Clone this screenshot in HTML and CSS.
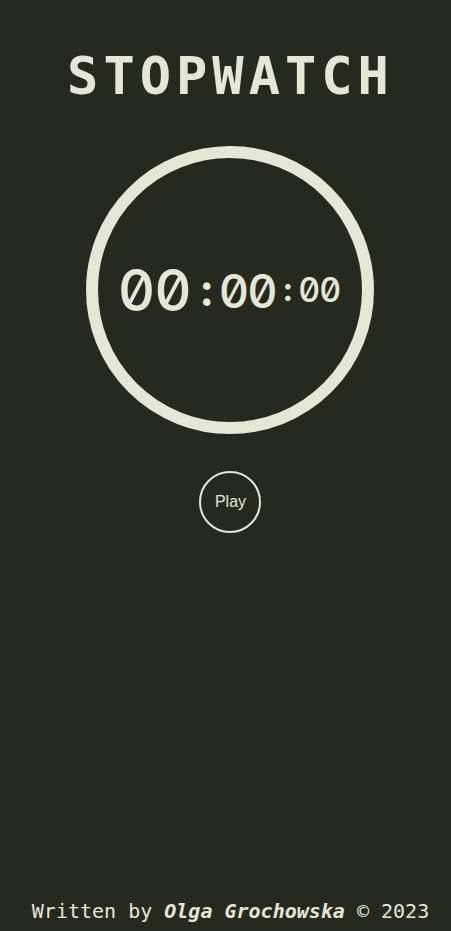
FILE: index.html
```html
<!DOCTYPE html>
<html lang="en">
<head>
<meta charset="utf-8">
<title>Stopwatch</title>
<link rel="stylesheet" href="styles.css">
</head>
<body>
<div class="page">
  <main class="main">
    <h1 class="title">STOPWATCH</h1>
    <div class="dial">
      <div class="time">
        <span class="t-min">00</span><span class="t-colon">:</span><span class="t-sec">00</span><span class="t-colon2">:</span><span class="t-ms">00</span>
      </div>
    </div>
    <button class="play">Play</button>
  </main>
  <footer class="footer">Written by <b class="author">Olga Grochowska</b> © 2023</footer>
</div>
</body>
</html>
```
FILE: styles.css
```css
html, body {
  margin: 0;
  padding: 0;
  background: #262a1e;
  color: #e4e7d5;
}
.page {
  min-height: 931px;
  box-sizing: border-box;
  padding-left: 10px;
  display: flex;
  flex-direction: column;
  align-items: center;
}
.main {
  flex: 1;
  display: flex;
  flex-direction: column;
  align-items: center;
}
.title {
  margin: 46px 0 0 0;
  font-family: "DejaVu Sans Mono", monospace;
  font-weight: bold;
  font-size: 52px;
  line-height: 60px;
  letter-spacing: 5px;
}
.dial {
  margin-top: 40px;
  width: 264px;
  height: 264px;
  border: 12px solid #e4e7d5;
  border-radius: 50%;
  display: flex;
  align-items: center;
  justify-content: center;
}
.time {
  font-family: Inter, "DejaVu Sans", sans-serif;
  font-feature-settings: "zero" 1, "tnum" 1;
  font-weight: 500;
  display: flex;
  align-items: center;
  margin-left: -3px;
}
.t-min { font-size: 58px; line-height: 1; letter-spacing: -1px; }
.t-colon { font-size: 44px; line-height: 1; margin: 0 6px 0 10px; font-weight: 700; }
.t-sec { font-size: 47px; line-height: 1; letter-spacing: -2px; }
.t-colon2 { font-size: 32px; line-height: 1; margin: 0 6px 0 8px; font-weight: 700; }
.t-ms { font-size: 34px; line-height: 1; letter-spacing: -1px; }
.play {
  margin-top: 37px;
  width: 62px;
  height: 62px;
  border: 2px solid #e4e7d5;
  border-radius: 50%;
  background: transparent;
  color: #e4e7d5;
  font-family: "Liberation Sans", Arial, sans-serif;
  font-size: 16px;
  padding: 0;
}
.footer {
  font-family: "DejaVu Sans Mono", monospace;
  font-size: 20px;
  line-height: 24px;
  margin-bottom: 8px;
}
.author {
  font-style: italic;
}
```
